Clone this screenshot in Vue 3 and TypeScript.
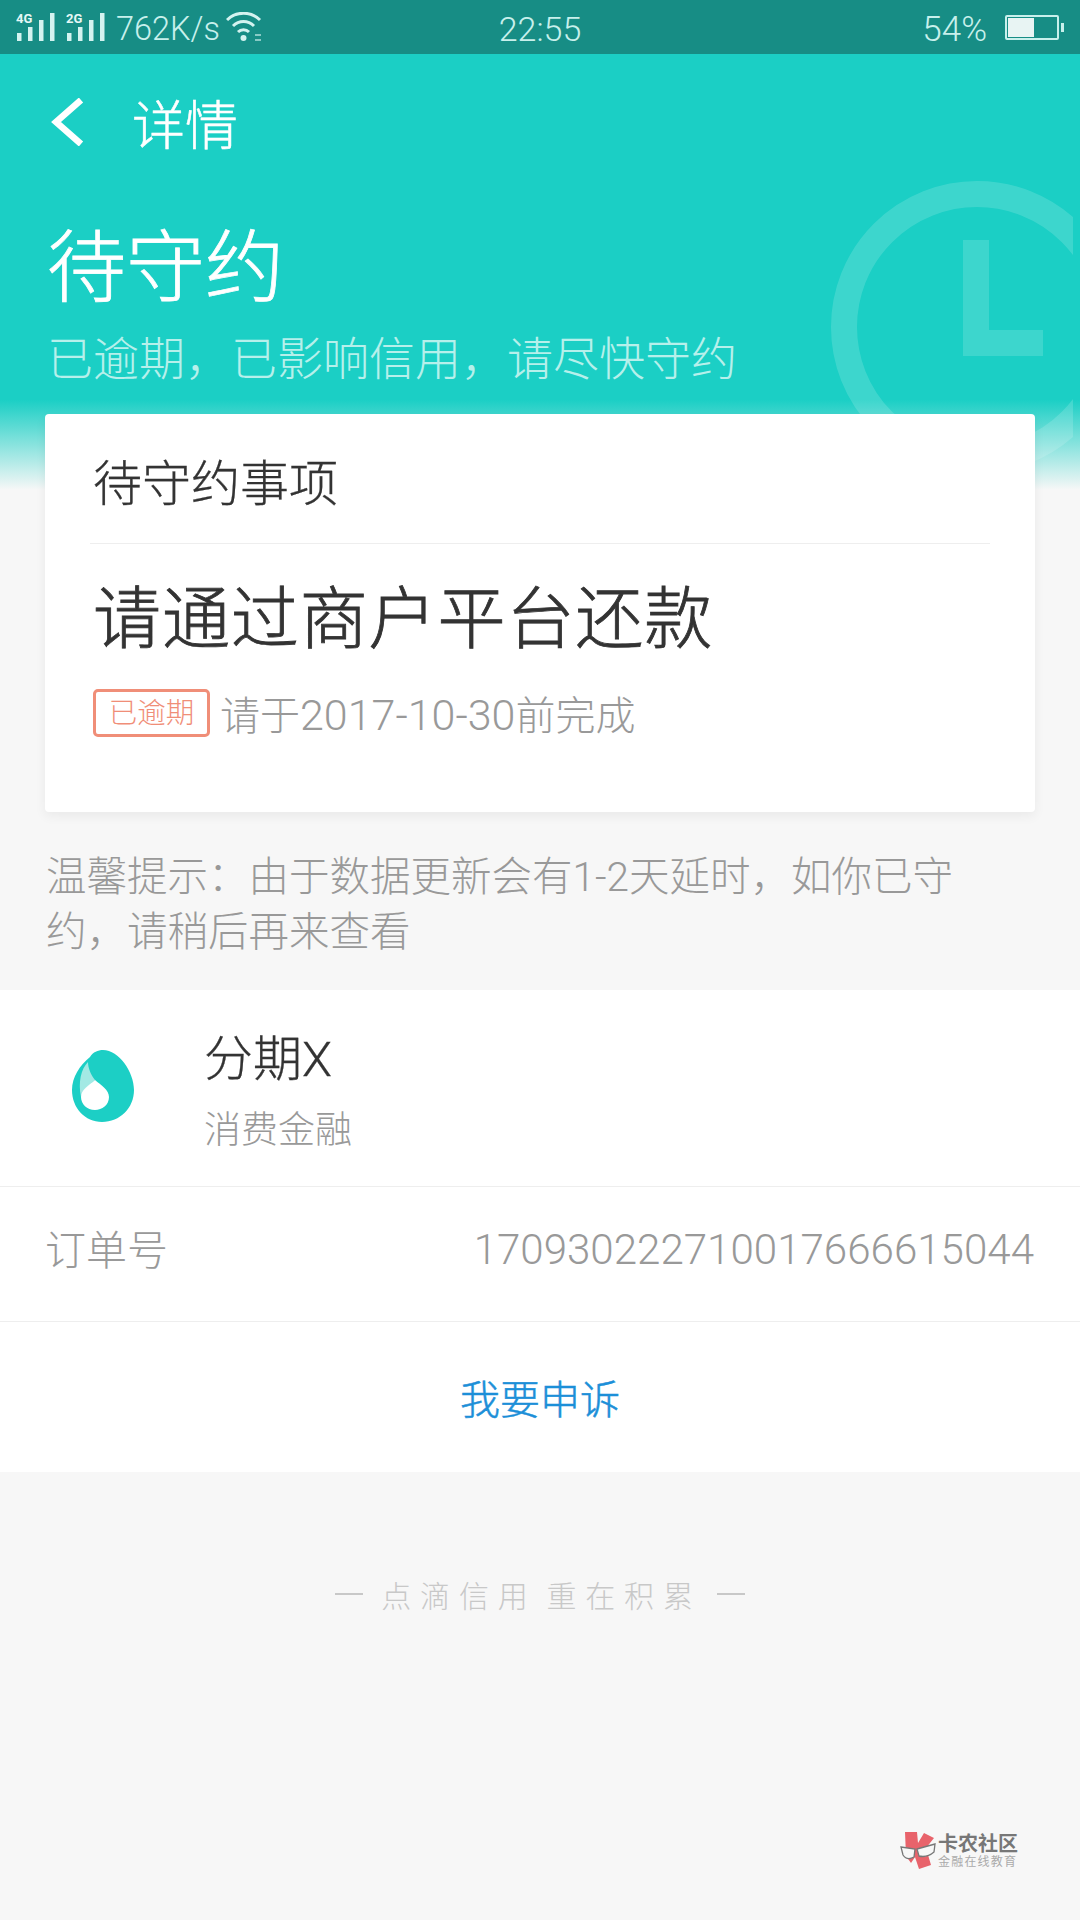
<template>
  <div class="page">
    <div class="status-bar">
      <div class="status-left">
        <svg class="signal" width="44" height="32" viewBox="0 -4 44 32">
          <text x="0" y="10" class="net">4G</text>
          <rect x="1" y="20" width="4.5" height="8" />
          <rect x="12" y="14" width="4.5" height="14" />
          <rect x="23" y="7" width="4.5" height="21" />
          <rect x="34" y="0" width="4.5" height="28" />
        </svg>
        <svg class="signal second" width="44" height="32" viewBox="0 -4 44 32">
          <text x="0" y="10" class="net">2G</text>
          <rect x="1" y="20" width="4.5" height="8" />
          <rect x="12" y="14" width="4.5" height="14" />
          <rect x="23" y="7" width="4.5" height="21" />
          <rect x="34" y="0" width="4.5" height="28" />
        </svg>
        <span class="speed">762K/s</span>
        <svg class="wifi" width="37" height="30" viewBox="0 0 37 30" fill="none">
          <path d="M1 8 C10 -1 25 -1 34 8" stroke-width="3" />
          <path d="M7 14 C13 8 22 8 28 14" stroke-width="3" />
          <path d="M12 20 C15 17 20 17 23 20" stroke-width="3" />
          <circle cx="17.5" cy="26" r="3" class="dot" />
          <path d="M29 23 h6 M29 28 h6" stroke-width="2" opacity=".6" />
        </svg>
      </div>
      <span class="clock">22:55</span>
      <div class="status-right">
        <span class="percent">54%</span>
        <div class="battery"><div class="battery-fill" :style="{ width: battery + '%' }"></div></div>
        <div class="battery-cap"></div>
      </div>
    </div>

    <div class="hero">
      <svg class="watermark" width="254" height="316" viewBox="0 0 254 316">
        <circle cx="158" cy="153" r="133" fill="none" stroke="#fff" stroke-width="26" />
        <path d="M144 66 h26 v90 h54 v26 h-80 z" fill="#fff" />
      </svg>
      <div class="nav">
        <svg class="back" width="34" height="48" viewBox="0 0 34 48" fill="none">
          <path d="M31 2 L6 24 L31 46" stroke="#fff" stroke-width="6.5" />
        </svg>
        <span class="nav-title">详情</span>
      </div>
      <h1 class="hero-title">待守约</h1>
      <p class="hero-sub">已逾期，已影响信用，请尽快守约</p>
    </div>

    <div class="card">
      <div class="card-title">待守约事项</div>
      <div class="card-main">请通过商户平台还款</div>
      <div class="card-meta">
        <span class="tag">已逾期</span>
        <span class="deadline">请于<span class="date">2017-10-30</span>前完成</span>
      </div>
    </div>

    <p class="tip">温馨提示：由于数据更新会有1-2天延时，如你已守约，请稍后再来查看</p>

    <div class="panel">
      <div class="merchant">
        <svg class="logo" width="62" height="72" viewBox="0 0 62 72">
          <path d="M18 7 C21 2 26 0 31 0 C47 0 62 22 62 40 C62 58 48 72 30 72 C13 72 0 58 0 40 C0 27 8 15 18 7 Z" fill="#1ccfc5" />
          <path d="M16 12 C9 19 6 32 9 47 C11 40 17 35 23 30 C19 25 16 18 16 12 Z" fill="#a3e9e4" />
          <path d="M23 30 C29 35 37 40 37 47 C37 55 30 60 23 60 C15 60 9 54 9 47 C9 40 17 35 23 30 Z" fill="#fff" />
        </svg>
        <div class="merchant-text">
          <div class="merchant-name">分期X</div>
          <div class="merchant-type">消费金融</div>
        </div>
      </div>
      <div class="order">
        <span class="order-label">订单号</span>
        <span class="order-no">{{ orderNo }}</span>
      </div>
      <div class="appeal">我要申诉</div>
    </div>

    <div class="slogan">
      <span class="dash"></span>
      <span>点滴信用</span>
      <span class="slogan-second">重在积累</span>
      <span class="dash dash-end"></span>
    </div>

    <div class="brand">
      <svg width="36" height="38" viewBox="0 0 36 38">
        <path d="M5 0 H17 L18 11 L24 1 L34 6 L26 16 L31 33 L19 37 L15 25 L11 31 L6 24 Z" fill="#e8636b" />
        <path d="M1 15 L15 17 L14 25 Q7 29 3 23 Z" fill="#f7f7f7" stroke="#777" stroke-width="1.3" />
        <path d="M17 17 L35 12 L34 20 Q27 26 19 24 Z" fill="#f7f7f7" stroke="#777" stroke-width="1.3" />
      </svg>
      <div class="brand-text">
        <div class="brand-name">卡农社区</div>
        <div class="brand-sub">金融在线教育</div>
      </div>
    </div>
  </div>
</template>

<script setup lang="ts">
const battery = 54
const orderNo = '170930222710017666615044'
</script>

<style scoped>
.page {
  position: relative;
  width: 1080px;
  height: 1920px;
  overflow: hidden;
  background: #f7f7f7;
  font-family: Roboto, "Noto Sans CJK SC", sans-serif;
}

.status-bar {
  display: flex;
  align-items: center;
  justify-content: space-between;
  position: relative;
  height: 54px;
  padding: 0 16px;
  box-sizing: border-box;
  background: #178d85;
  color: #c8f0ec;
}

.status-left,
.status-right {
  display: flex;
  align-items: center;
}

.signal {
  margin-top: -4px;
}

.signal rect {
  fill: #d4f3f0;
}

.signal .net {
  fill: #e6f8f6;
  font-size: 13px;
  font-weight: 700;
}

.signal.second {
  margin-left: 6px;
}

.speed {
  margin-left: 6px;
  padding-top: 4px;
  font-size: 32.5px;
  font-weight: 300;
}

.wifi {
  margin-left: 6px;
  stroke: #d4f3f0;
}

.wifi .dot {
  fill: #d4f3f0;
  stroke: none;
}

.clock {
  position: absolute;
  left: 0;
  right: 0;
  padding-top: 4px;
  text-align: center;
  font-size: 34px;
  font-weight: 300;
}

.percent {
  padding-top: 4px;
  margin-right: 18px;
  font-size: 35px;
  font-weight: 300;
}

.battery {
  width: 54px;
  height: 25px;
  box-sizing: border-box;
  border: 2px solid #c8f0ec;
  border-radius: 2px;
  padding: 1px;
}

.battery-fill {
  height: 100%;
  background: #e8f4f3;
}

.battery-cap {
  width: 3px;
  height: 9px;
  margin-left: 2px;
  background: #c8f0ec;
}

.hero {
  position: relative;
  height: 436px;
  box-sizing: border-box;
  padding: 0 47px;
  background: linear-gradient(#1bcfc5 0, #1bcfc5 346px, #f7f7f7 436px);
  overflow: hidden;
  color: #fff;
}

.watermark {
  position: absolute;
  left: 819px;
  top: 120px;
  opacity: 0.15;
}

.nav {
  display: flex;
  align-items: center;
  height: 136px;
}

.back {
  margin-left: 3px;
}

.nav-title {
  margin-left: 48px;
  font-size: 53px;
  font-weight: 300;
  -webkit-text-stroke: 0.5px #fff;
}

.hero-title {
  margin: 29px 0 0;
  font-size: 79px;
  font-weight: 300;
  line-height: 100px;
  -webkit-text-stroke: 0.8px #fff;
}

.hero-sub {
  margin: 10px 0 0;
  font-size: 46px;
  font-weight: 300;
  line-height: 60px;
  color: #b6f0eb;
}

.card {
  position: relative;
  margin: -76px 45px 0;
  height: 398px;
  padding: 0 45px;
  box-sizing: border-box;
  background: #fff;
  border-radius: 4px;
  box-shadow: 0 4px 12px rgba(0, 0, 0, 0.06);
}

.card-title {
  height: 129px;
  line-height: 142px;
  font-size: 49px;
  font-weight: 300;
  color: #333;
  -webkit-text-stroke: 0.3px #333;
  border-bottom: 1px solid #eee;
  padding-left: 3px;
}

.card-main {
  margin-top: 28px;
  padding-left: 3px;
  font-size: 68px;
  font-weight: 300;
  line-height: 96px;
  letter-spacing: 0.9px;
  color: #333;
  -webkit-text-stroke: 0.8px #333;
}

.card-meta {
  display: flex;
  align-items: center;
  margin-top: 16px;
  padding-left: 3px;
}

.tag {
  width: 117px;
  height: 48px;
  box-sizing: border-box;
  border: 3px solid #f08e78;
  border-radius: 5px;
  text-align: center;
  line-height: 44px;
  font-size: 28.5px;
  font-weight: 300;
  color: #f08e78;
}

.deadline {
  margin-left: 10px;
  font-size: 40px;
  font-weight: 300;
  color: #999;
}

.date {
  font-size: 43px;
}

.tip {
  margin: 38px 100px 0 46px;
  font-size: 40.5px;
  font-weight: 300;
  line-height: 55px;
  color: #999;
}

.panel {
  margin-top: 30px;
  background: #fff;
}

.merchant {
  display: flex;
  align-items: center;
  height: 197px;
  box-sizing: border-box;
  border-bottom: 1px solid #eee;
  padding-left: 72px;
}

.logo {
  margin-bottom: 4px;
}

.merchant-text {
  margin-left: 70px;
  padding-top: 5px;
}

.merchant-name {
  font-size: 49px;
  font-weight: 300;
  line-height: 68px;
  color: #333;
  -webkit-text-stroke: 0.3px #333;
}

.merchant-type {
  margin-top: 12px;
  font-size: 37px;
  font-weight: 300;
  line-height: 50px;
  color: #999;
}

.order {
  display: flex;
  align-items: center;
  justify-content: space-between;
  height: 135px;
  box-sizing: border-box;
  padding: 0 46px 10px 45px;
  border-bottom: 1px solid #eee;
  font-weight: 300;
  color: #999;
}

.order-label {
  margin-bottom: 4px;
  font-size: 41px;
}

.order-no {
  font-size: 42.1px;
}

.appeal {
  height: 150px;
  line-height: 158px;
  text-align: center;
  font-size: 40px;
  font-weight: 300;
  color: #1c8fd8;
  -webkit-text-stroke: 0.5px #1c8fd8;
}

.slogan {
  display: flex;
  align-items: center;
  justify-content: center;
  margin-top: 97px;
  height: 50px;
  font-size: 30px;
  font-weight: 300;
  letter-spacing: 8.8px;
  color: #c8c8c8;
}

.slogan-second {
  margin-left: 10px;
}

.dash {
  width: 28px;
  height: 2px;
  background: #c8c8c8;
  margin: 0 18px;
}

.dash-end {
  margin-left: 15px;
}

.brand {
  position: absolute;
  left: 900px;
  top: 1832px;
  display: flex;
  align-items: center;
  color: #777;
}

.brand-text {
  margin-left: 2px;
}

.brand-name {
  font-size: 20px;
  font-weight: 700;
  line-height: 22px;
}

.brand-sub {
  font-size: 12px;
  line-height: 14px;
  letter-spacing: 1.2px;
  color: #aaa;
}
</style>
